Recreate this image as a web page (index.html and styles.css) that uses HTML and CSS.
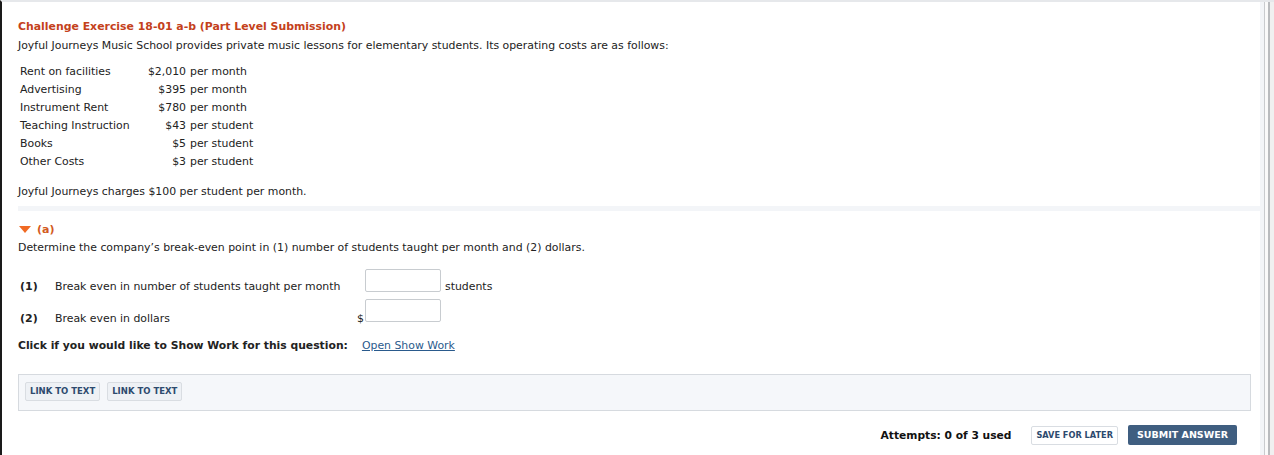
FILE: index.html
```html
<!DOCTYPE html>
<html>
<head>
<meta charset="utf-8">
<link rel="stylesheet" href="styles.css">
</head>
<body>
<div class="frame">
  <div class="page">
    <section class="intro">
      <h1 class="title">Challenge Exercise 18-01 a-b (Part Level Submission)</h1>
      <p class="lead">Joyful Journeys Music School provides private music lessons for elementary students. Its operating costs are as follows:</p>
      <table class="costs">
        <tr><td class="lbl">Rent on facilities</td><td class="amt">$2,010</td><td class="unit">per month</td></tr>
        <tr><td class="lbl">Advertising</td><td class="amt">$395</td><td class="unit">per month</td></tr>
        <tr><td class="lbl">Instrument Rent</td><td class="amt">$780</td><td class="unit">per month</td></tr>
        <tr><td class="lbl">Teaching Instruction</td><td class="amt">$43</td><td class="unit">per student</td></tr>
        <tr><td class="lbl">Books</td><td class="amt">$5</td><td class="unit">per student</td></tr>
        <tr><td class="lbl">Other Costs</td><td class="amt">$3</td><td class="unit">per student</td></tr>
      </table>
      <p class="charges">Joyful Journeys charges $100 per student per month.</p>
    </section>
    <div class="band"></div>
    <section class="part">
      <div class="part-head"><span class="tri"></span><span class="part-label">(a)</span></div>
      <p class="question">Determine the company’s break-even point in (1) number of students taught per month and (2) dollars.</p>
      <div class="answers">
        <div class="arow first">
          <span class="num">(1)</span>
          <span class="desc">Break even in number of students taught per month</span>
          <span class="pre"></span>
          <span class="box"></span>
          <span class="post">students</span>
        </div>
        <div class="arow second">
          <span class="num">(2)</span>
          <span class="desc">Break even in dollars</span>
          <span class="pre">$</span>
          <span class="box"></span>
          <span class="post"></span>
        </div>
      </div>
      <div class="showwork"><b>Click if you would like to Show Work for this question:</b><a class="link" href="#">Open Show Work</a></div>
      <div class="links">
        <span class="btn-link">LINK TO TEXT</span>
        <span class="btn-link">LINK TO TEXT</span>
      </div>
      <div class="footer">
        <span class="attempts">Attempts: 0 of 3 used</span>
        <span class="btn-save">SAVE FOR LATER</span>
        <span class="btn-submit">SUBMIT ANSWER</span>
      </div>
    </section>
  </div>
  <div class="rail"></div>
</div>
</body>
</html>
```
FILE: styles.css
```css
html, body {
  margin: 0;
  padding: 0;
  background: #ffffff;
}
body {
  font-family: "DejaVu Sans", Verdana, sans-serif;
  font-size: 10.9px;
  color: #222;
}
.frame {
  display: flex;
  height: 455px;
  border-left: 2px solid #1a1a1a;
  border-top: 2px solid #e6e8eb;
  box-sizing: border-box;
}
.page {
  flex: 1;
  padding: 17px 0 0 16px;
  border-right: 4px solid #f3f5f8;
}
.rail {
  width: 9px;
  border-left: 1px solid #c9cbce;
  background: linear-gradient(to right, #fafafa 0, #fafafa 3px, #b9bbbe 3px, #b9bbbe 5px, #f0f0f0 5px);
}
.title {
  margin: 0;
  font-size: 10.9px;
  font-weight: bold;
  color: #c4411b;
  line-height: 16px;
}
.lead {
  margin: 3px 0 0;
  line-height: 16px;
}
.costs {
  margin-top: 9px;
  border-collapse: collapse;
}
.costs td {
  padding: 0;
  height: 18px;
  line-height: 18px;
}
.costs .lbl {
  width: 121px;
  padding-left: 2px;
}
.costs .amt {
  width: 45px;
  text-align: right;
}
.costs .unit {
  padding-left: 4px;
}
.charges {
  margin: 13px 0 0;
  line-height: 16px;
}
.band {
  height: 5px;
  margin: 6px 0 0 0;
  background: #f3f5f8;
}
.part-head {
  display: flex;
  align-items: center;
  gap: 6px;
  margin-top: 10px;
  height: 16px;
}
.tri {
  width: 0;
  height: 0;
  margin-left: 1px;
  border-left: 6px solid transparent;
  border-right: 6px solid transparent;
  border-top: 7px solid #f06a24;
}
.part-label {
  font-weight: bold;
  color: #d35a1e;
  font-size: 11px;
}
.question {
  margin: 3px 0 0;
  line-height: 16px;
}
.answers {
  margin-top: 13px;
  display: flex;
  flex-direction: column;
  gap: 7px;
}
.arow {
  display: flex;
  align-items: flex-end;
  height: 23px;
}
.arow.first > span:not(.box) {
  line-height: 10px;
}
.arow.second > span:not(.box) {
  line-height: 7px;
}
.num {
  width: 35px;
  padding-left: 2px;
  font-weight: bold;
  font-size: 11px;
}
.desc {
  width: 302px;
}
.pre {
  width: 8px;
}
.box {
  width: 74px;
  height: 21px;
  border: 1px solid #c8ccd0;
  border-radius: 2px;
  background: #fff;
}
.post {
  padding-left: 4px;
}
.showwork {
  margin-top: 16px;
  display: flex;
  align-items: baseline;
  line-height: 16px;
}
.showwork b {
  font-size: 10.8px;
}
.link {
  margin-left: 14px;
  color: #2a5a8c;
  text-decoration: underline;
}
.links {
  margin: 20px 9px 0 0;
  height: 37px;
  box-sizing: border-box;
  border: 1px solid #d6dadf;
  background: #f5f7fa;
  display: flex;
  align-items: center;
  gap: 7px;
  padding: 0 0 3px 6px;
}
.btn-link {
  display: inline-block;
  height: 17px;
  line-height: 17px;
  padding: 0 4px;
  border: 1px solid #d9dde2;
  border-radius: 2px;
  background: #eef1f5;
  color: #2d4a6e;
  font-weight: bold;
  font-size: 8.5px;
}
.footer {
  margin-top: 14px;
  display: flex;
  justify-content: flex-end;
  align-items: center;
  padding-right: 23px;
}
.attempts {
  font-weight: bold;
  font-size: 10.7px;
  color: #111;
  margin-right: 20px;
}
.btn-save {
  display: inline-block;
  height: 17px;
  line-height: 17px;
  padding: 0 4px;
  border: 1px solid #d9dde2;
  border-radius: 2px;
  background: #ffffff;
  color: #2d4a6e;
  font-weight: bold;
  font-size: 8.2px;
  margin-right: 10px;
}
.btn-submit {
  display: inline-block;
  height: 20px;
  line-height: 20px;
  padding: 0 9px;
  border-radius: 2px;
  background: #3f5e80;
  color: #ffffff;
  font-weight: bold;
  font-size: 9.5px;
}
```
